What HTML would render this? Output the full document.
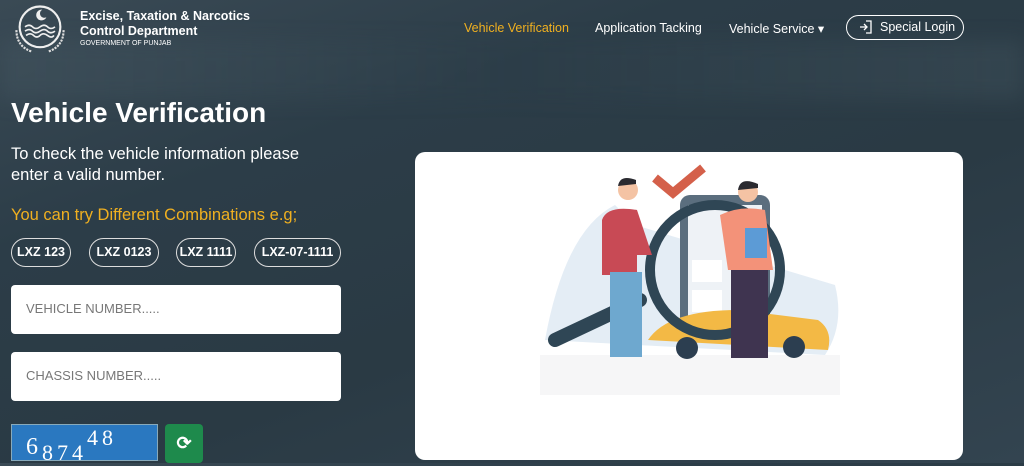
<!DOCTYPE html>
<html><head><meta charset="utf-8"><style>
*{margin:0;padding:0;box-sizing:border-box}
body{width:1024px;height:463px;overflow:hidden;font-family:"Liberation Sans",sans-serif;color:#fff;position:relative;
background:linear-gradient(160deg,#3a4a55 0%,#2c3d48 30%,#2a3a44 60%,#334450 100%);}
.bg1{position:absolute;left:0;top:40px;width:1024px;height:60px;background:linear-gradient(90deg,rgba(80,100,110,.25),rgba(50,70,80,.05),rgba(90,110,120,.2));filter:blur(10px)}
.logo{position:absolute;left:10px;top:3px;width:60px;height:52px}
.t1{position:absolute;left:80px;top:9px;font-size:12.5px;font-weight:bold;line-height:15px}
.t2{position:absolute;left:80px;top:40px;font-size:7px}
.nav{position:absolute;top:21px;font-size:12.5px}
.btn{position:absolute;left:846px;top:15px;width:118px;height:25px;border:1.5px solid #fff;border-radius:13px;font-size:12.5px;padding:4px 0 0 33px}
h1{position:absolute;left:11px;top:97px;font-size:28px;font-weight:bold}
.p{position:absolute;left:11px;top:144px;font-size:16.5px;line-height:21px}
.y{position:absolute;left:11px;top:206px;font-size:16.5px;color:#f0b020}
.chip{position:absolute;top:238px;height:29px;border:1.3px solid #ddd;border-radius:15px;font-size:12.5px;font-weight:bold;text-align:center;line-height:27px}
.inp{position:absolute;left:11px;width:330px;height:49px;background:#fff;border-radius:4px;color:#777;font-size:13px;padding:16px 0 0 15px}
.cap{position:absolute;left:11px;top:424px;width:147px;height:37px;background:#2a78c0;border:1px solid #8ab;font-family:"Liberation Serif",serif;font-size:24px;color:#fff;padding:0 0 0 14px;letter-spacing:4px}
.ref{position:absolute;left:165px;top:424px;width:38px;height:39px;background:#1e8a4c;border-radius:4px;text-align:center;line-height:39px;font-size:18px;font-weight:bold}
.card{position:absolute;left:415px;top:152px;width:548px;height:308px;background:#fff;border-radius:10px}
</style></head><body>
<div class="bg1"></div>
<svg class="logo" viewBox="0 0 56 48"><circle cx="28" cy="22" r="19" fill="none" stroke="#eee" stroke-width="2"/><path d="M30 6a5 5 0 1 0 4 7a4 4 0 1 1-4-7z" fill="#eee"/><path d="M14 22q4-3 7 0t7 0t7 0t7 0M14 26q4-3 7 0t7 0t7 0t7 0M15 30q4-3 7 0t6 0t7 0t6 0" stroke="#eee" fill="none" stroke-width="1.5"/><path d="M6 25q0 15 14 20M50 25q0 15-14 20" stroke="#ddd" fill="none" stroke-width="2" stroke-dasharray="2 1"/></svg>
<div class="t1">Excise, Taxation &amp; Narcotics<br>Control Department</div>
<div class="t2">GOVERNMENT OF PUNJAB</div>
<div class="nav" style="left:464px;color:#f0b020">Vehicle Verification</div>
<div class="nav" style="left:595px">Application Tacking</div>
<div class="nav" style="left:729px">Vehicle Service ▾</div>
<div class="btn"><svg style="position:absolute;left:12px;top:4px" width="14" height="14" viewBox="0 0 14 14" fill="none" stroke="#fff" stroke-width="1.3"><path d="M7 1h5v12H7M1 7h7M5 4l3 3-3 3"/></svg>Special Login</div>
<h1>Vehicle Verification</h1>
<div class="p">To check the vehicle information please<br>enter a valid number.</div>
<div class="y">You can try Different Combinations e.g;</div>
<div class="chip" style="left:11px;width:60px">LXZ 123</div>
<div class="chip" style="left:89px;width:70px">LXZ 0123</div>
<div class="chip" style="left:176px;width:60px">LXZ 1111</div>
<div class="chip" style="left:254px;width:87px">LXZ-07-1111</div>
<div class="inp" style="top:285px">VEHICLE NUMBER.....</div>
<div class="inp" style="top:352px">CHASSIS NUMBER.....</div>
<div class="cap">6<sub style="font-size:22px">8</sub><sub style="font-size:22px">7</sub><sub style="font-size:22px">4</sub><sup style="font-size:22px">4</sup><sup style="font-size:22px">8</sup></div>
<div class="ref">⟳</div>
<div class="card">
<svg width="548" height="308" viewBox="415 152 548 308">
<rect x="540" y="355" width="300" height="40" fill="#f6f6f7"/>
<path d="M545 340q20-110 70-135l20 20 200 60q10 40-10 70z" fill="#e4edf5"/>
<rect x="680" y="195" width="90" height="140" rx="10" fill="#5b6e7e"/>
<rect x="688" y="205" width="74" height="125" fill="#eef2f6"/>
<rect x="692" y="260" width="30" height="22" fill="#fff"/><rect x="692" y="290" width="30" height="22" fill="#fff"/>
<path d="M648 340q20-30 90-30l80 10q15 10 10 30z" fill="#f3b945"/>
<circle cx="687" cy="348" r="11" fill="#2c3e50"/><circle cx="794" cy="347" r="11" fill="#2c3e50"/>
<line x1="555" y1="340" x2="640" y2="300" stroke="#2f4655" stroke-width="14" stroke-linecap="round"/>
<circle cx="715" cy="270" r="65" fill="none" stroke="#2f4655" stroke-width="10"/>
<path d="M655 178l18 15 30-25" stroke="#d4604a" stroke-width="9" fill="none"/>
<circle cx="628" cy="190" r="10" fill="#f4c3a4"/><path d="M618 186q2-12 18-6v4z" fill="#2a2a30"/>
<path d="M602 220q5-15 35-10l15 45h-15v20h-35z" fill="#c84a55"/>
<rect x="610" y="272" width="32" height="85" fill="#6ea8cf"/>
<circle cx="748" cy="192" r="10" fill="#f4c3a4"/><path d="M738 190q2-14 20-6v4z" fill="#2a2a30"/>
<path d="M720 215q20-10 45-5l8 60h-45z" fill="#f39279"/>
<rect x="745" y="228" width="22" height="30" fill="#5c9bd6"/>
<rect x="731" y="270" width="37" height="88" fill="#3f3450"/>
</svg>
</div>
</body></html>
